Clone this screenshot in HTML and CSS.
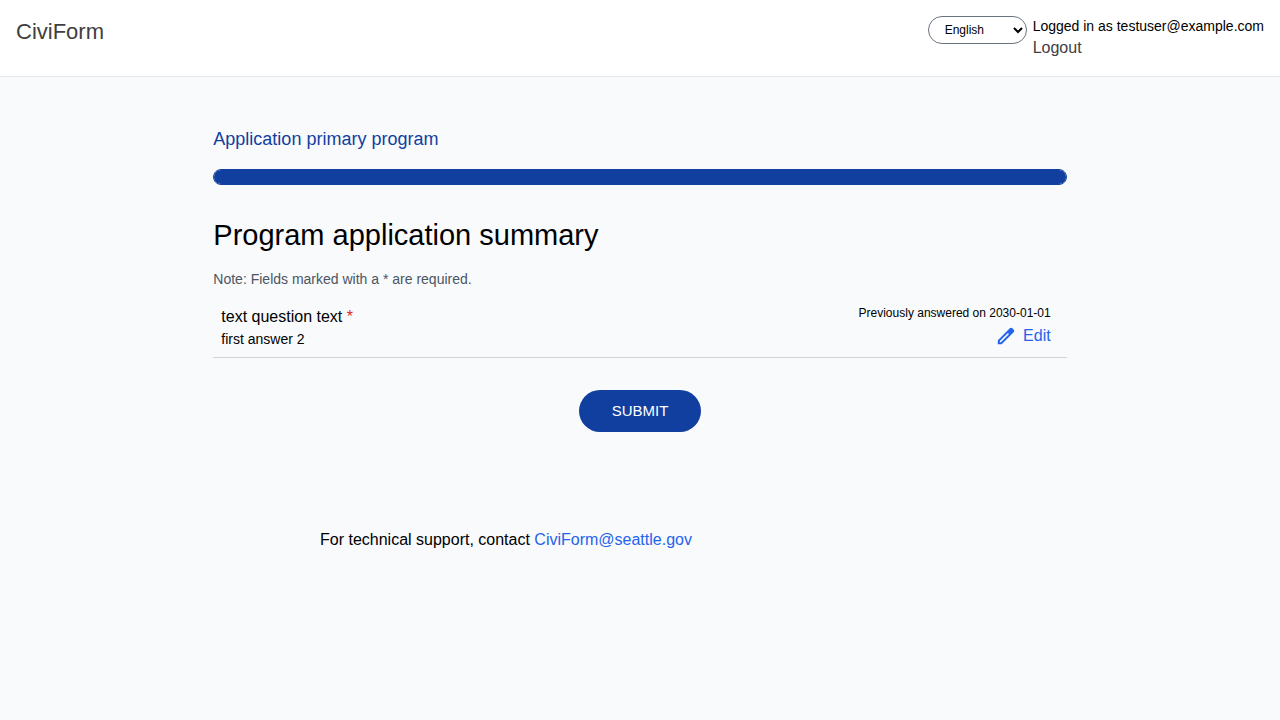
FILE: index.html
```html
<!DOCTYPE html>
<html lang="en">
<head>
<meta charset="utf-8">
<meta name="viewport" content="width=device-width, initial-scale=1">
<title>Program application summary</title>
<link rel="stylesheet" href="styles.css">
</head>
<body>
<header class="site-header">
  <a class="brand" href="#">CiviForm</a>
  <div class="account">
    <select class="language" aria-label="Language">
      <option>English</option>
    </select>
    <div class="session">
      <span class="session-user">Logged in as testuser@example.com</span>
      <a class="logout" href="#">Logout</a>
    </div>
  </div>
</header>
<main class="content">
  <h2 class="program-name">Application primary program</h2>
  <div class="progress" role="progressbar" aria-label="Application progress" aria-valuenow="100" aria-valuemin="0" aria-valuemax="100">
    <div class="progress-fill" style="width: 100%"></div>
  </div>
  <h1 class="title">Program application summary</h1>
  <p class="note">Note: Fields marked with a * are required.</p>
  <section class="answer-row">
    <div class="answer">
      <div class="question">text question text <span class="required">*</span></div>
      <div class="answer-text">first answer 2</div>
    </div>
    <div class="actions">
      <div class="answered-on">Previously answered on 2030-01-01</div>
      <a class="edit" href="#">
        <svg class="edit-icon" viewBox="1 1 22 22" aria-hidden="true"><path fill-rule="evenodd" d="M3 21v-4.25L16.2 3.575c.4-.38.88-.575 1.425-.575.56 0 1.03.2 1.425.6L20.425 5c.39.38.575.87.575 1.4 0 .56-.18 1.03-.575 1.425L7.25 21zM5.2 18.8h1.2L15.3 9.9 14.1 8.7 5.2 17.6z"/></svg>
        <span>Edit</span>
      </a>
    </div>
  </section>
  <form class="submit-form">
    <button class="submit" type="button">SUBMIT</button>
  </form>
</main>
<footer class="support">For technical support, contact <a class="support-link" href="#">CiviForm@seattle.gov</a></footer>
</body>
</html>
```
FILE: styles.css
```css
* {
  box-sizing: border-box;
}

body {
  margin: 0;
  min-height: 100vh;
  background: #f8fafc;
  color: #000;
  font-family: "Liberation Sans", Arial, sans-serif;
  font-size: 16px;
  line-height: 24px;
}

h1, h2, p {
  margin: 0;
  font-weight: 400;
}

a {
  text-decoration: none;
}

.site-header {
  display: flex;
  justify-content: space-between;
  align-items: flex-start;
  padding: 16px;
  background: #fff;
  border-bottom: 1px solid #e5e7eb;
}

.brand {
  color: #404040;
  font-size: 22px;
  line-height: 32px;
}

.account {
  display: flex;
  align-items: flex-start;
  gap: 6px;
}

.language {
  width: 99px;
  height: 28px;
  padding: 0 0 0 12px;
  border: 1px solid #6b7280;
  border-radius: 14px;
  background: #fff;
  color: #000;
  font-family: inherit;
  font-size: 12px;
}

.session {
  display: flex;
  flex-direction: column;
}

.session-user {
  font-size: 14px;
  line-height: 20px;
}

.logout {
  color: #404040;
}

.content {
  width: 66.6667%;
  margin: 0 auto;
  padding-top: 48px;
}

.program-name {
  color: #113f9f;
  font-size: 18px;
  line-height: 28px;
}

.progress {
  height: 16px;
  margin: 16px 0 32px;
  border: 1px solid #113f9f;
  border-radius: 8px;
  background: #113f9f;
  overflow: hidden;
}

.progress-fill {
  height: 100%;
  background: #113f9f;
}

.title {
  font-size: 29px;
  line-height: 36px;
}

.note {
  margin-top: 16px;
  color: #4b5563;
  font-size: 14px;
  line-height: 20px;
}

.answer-row {
  display: flex;
  justify-content: space-between;
  margin-top: 8px;
  padding: 8px 16px 8px 8px;
  border-bottom: 1px solid #d1d5db;
}

.answer-text {
  font-size: 14px;
  line-height: 20px;
}

.required {
  color: #dc2626;
}

.actions {
  display: flex;
  flex-direction: column;
  align-items: flex-end;
}

.answered-on {
  font-size: 12px;
  line-height: 16px;
}

.edit {
  display: flex;
  align-items: center;
  gap: 7px;
  margin-top: 3px;
  color: #2563eb;
}

.edit-icon {
  width: 20px;
  height: 20px;
  fill: currentColor;
}

.submit-form {
  display: flex;
  justify-content: center;
  margin-top: 32px;
}

.submit {
  padding: 9px 33px;
  border: 0;
  border-radius: 21px;
  background: #113f9f;
  color: #fff;
  font: inherit;
  font-size: 15px;
}

.support {
  padding: 96px 25% 0;
}

.support-link {
  color: #2563eb;
}
```
